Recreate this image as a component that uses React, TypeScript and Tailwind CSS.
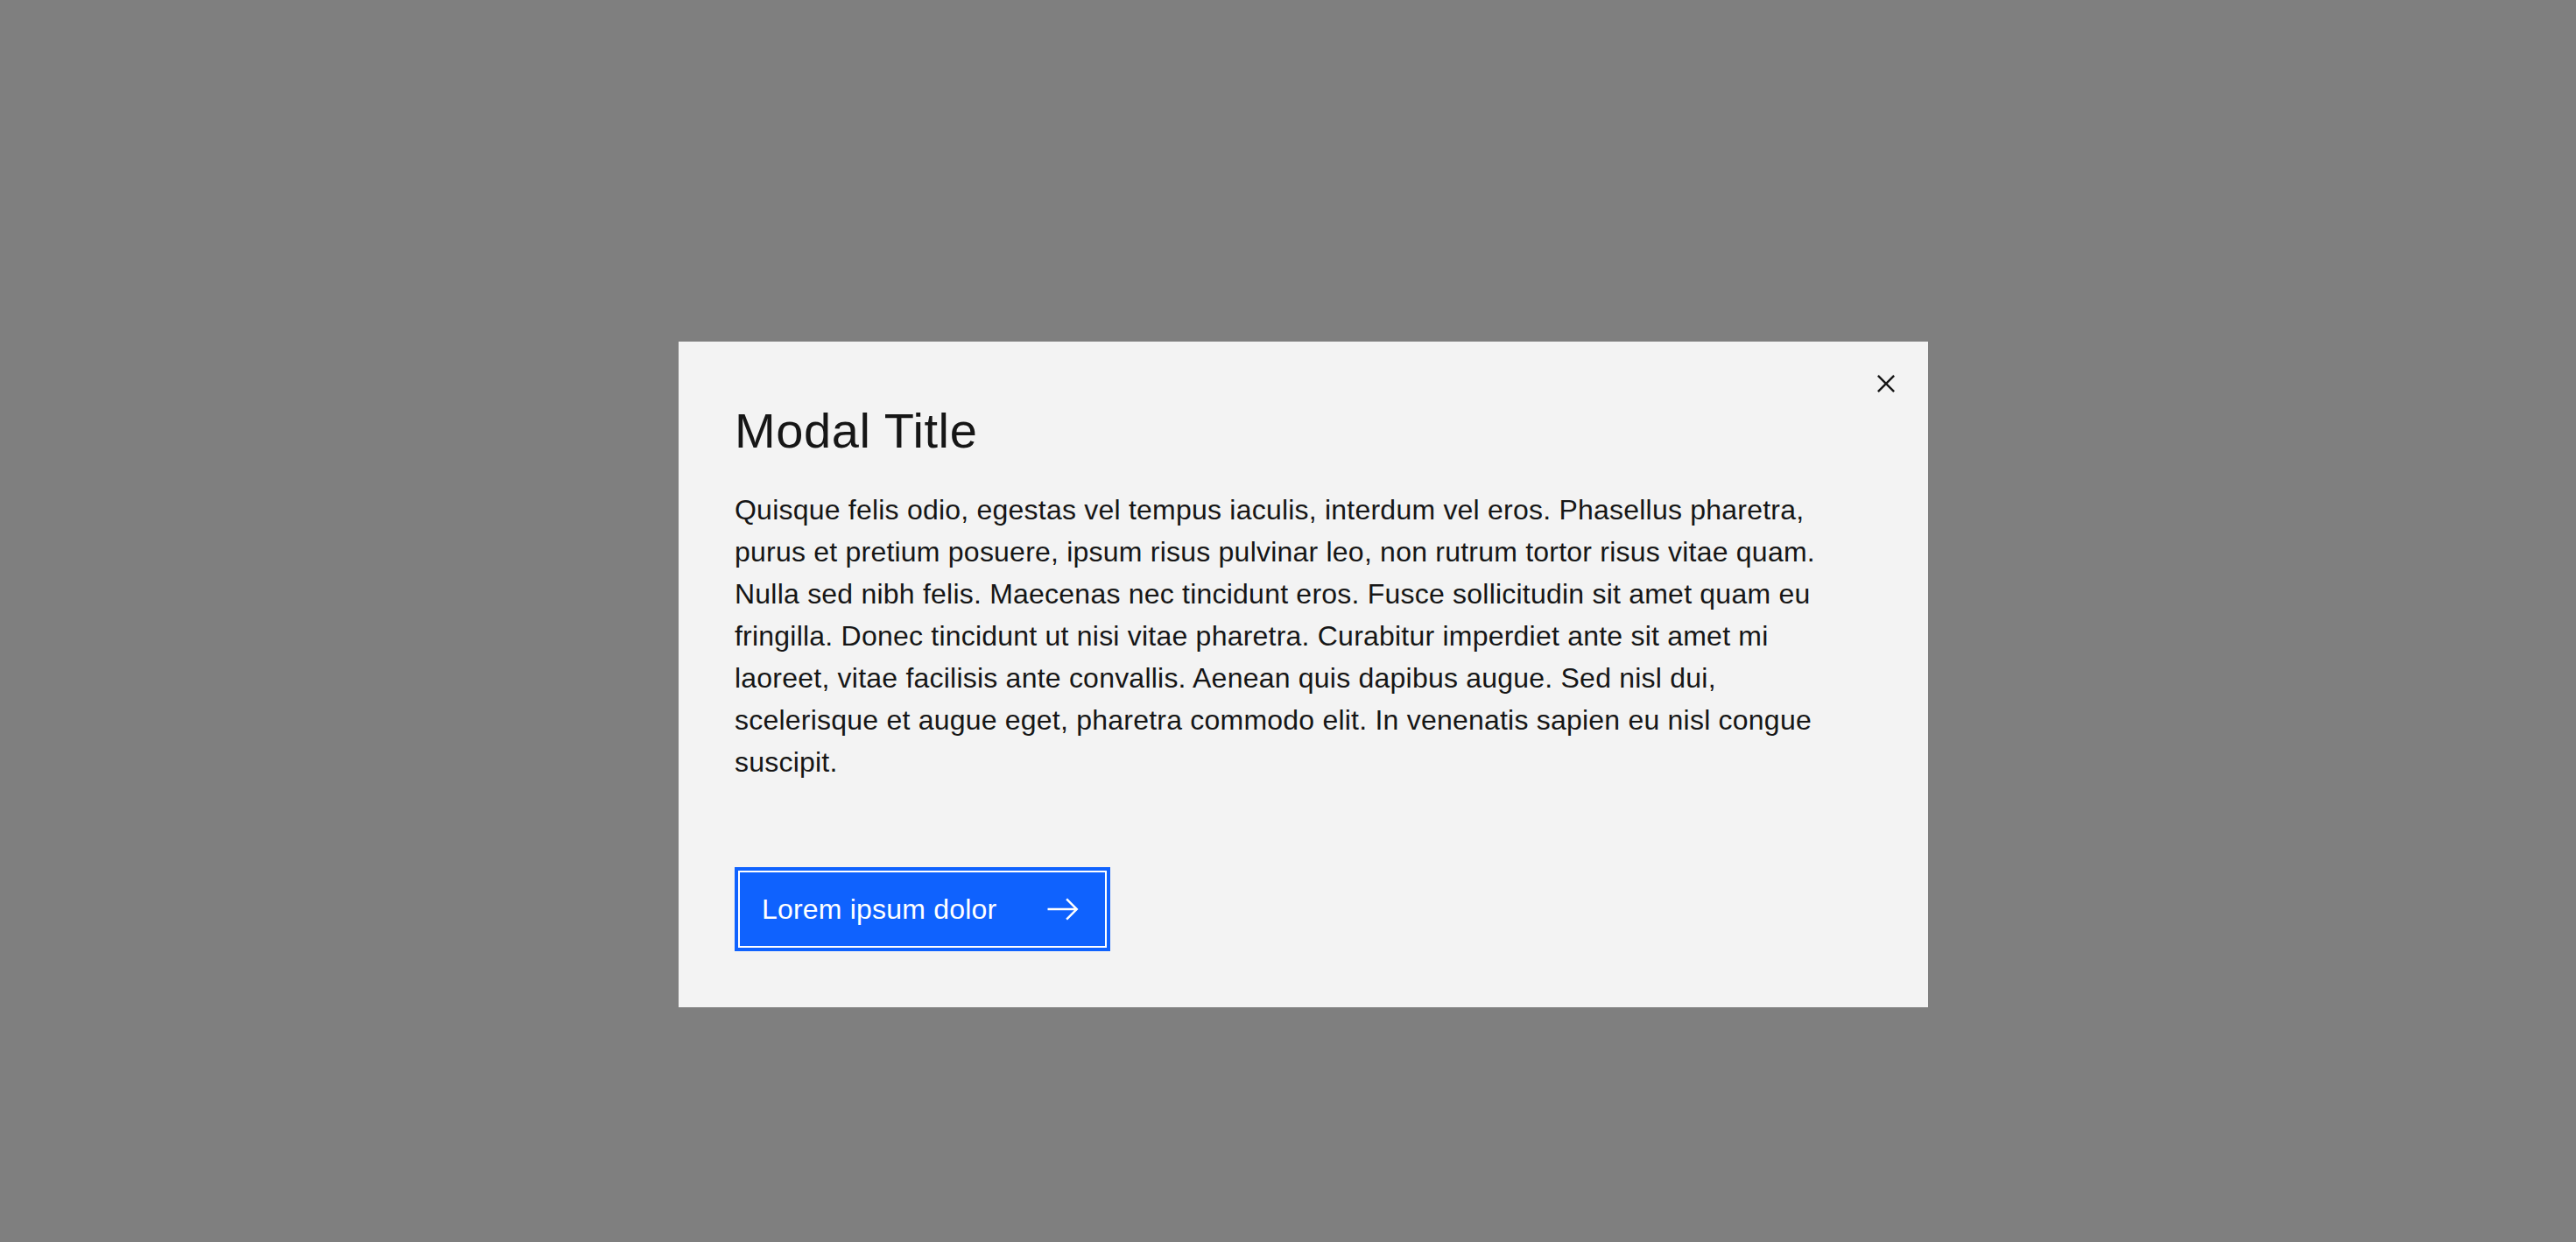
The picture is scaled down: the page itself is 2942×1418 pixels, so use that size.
const paragraphLines = [
  "Quisque felis odio, egestas vel tempus iaculis, interdum vel eros. Phasellus pharetra,",
  "purus et pretium posuere, ipsum risus pulvinar leo, non rutrum tortor risus vitae quam.",
  "Nulla sed nibh felis. Maecenas nec tincidunt eros. Fusce sollicitudin sit amet quam eu",
  "fringilla. Donec tincidunt ut nisi vitae pharetra. Curabitur imperdiet ante sit amet mi",
  "laoreet, vitae facilisis ante convallis. Aenean quis dapibus augue. Sed nisl dui,",
  "scelerisque et augue eget, pharetra commodo elit. In venenatis sapien eu nisl congue",
  "suscipit.",
];

const CloseIcon = () => (
  <svg viewBox="0 0 16 16" className="w-[40px] h-[40px]" fill="#161616">
    <path d="M12 4.7L11.3 4 8 7.3 4.7 4 4 4.7 7.3 8 4 11.3 4.7 12 8 8.7 11.3 12 12 11.3 8.7 8z" />
  </svg>
);

const ArrowIcon = () => (
  <svg viewBox="0 0 16 16" className="w-[40px] h-[40px]" fill="#ffffff">
    <path d="M9.3 3.7L13.1 7.5H1v1h12.1l-3.8 3.8L10 13l5-5-5-5z" />
  </svg>
);

const App = () => {
  return (
    <div
      className="min-h-screen w-full bg-[#7f7f7f] pt-[390px] pl-[775px]"
      style={{ fontFamily: '"Liberation Sans", Arial, sans-serif' }}
    >
      {/* Modal */}
      <div className="relative w-[1427px] bg-[#f3f3f3] pt-[66px] pb-[64px] pl-[64px] text-[#161616]">
        <button className="absolute top-0 right-0 w-[96px] h-[96px] flex items-center justify-center">
          <CloseIcon />
        </button>

        <h2 className="text-[56px] leading-[72px] font-normal tracking-[0.6px]">Modal Title</h2>

        <p className="mt-[30px] text-[32px] leading-[48px] tracking-[0.22px] whitespace-nowrap">
          {paragraphLines.map((line, index) => (
            <span key={index} className="block">
              {line}
            </span>
          ))}
        </p>

        <button className="relative mt-[96px] flex items-center h-[96px] w-[429px] bg-[#0f62fe] border-4 border-[#0f62fe] shadow-[inset_0_0_0_2px_#ffffff] pl-[27px] text-white text-[32px] leading-[48px] tracking-[0.2px] text-left">
          Lorem ipsum dolor
          <span className="absolute right-[30px] top-1/2 -translate-y-1/2 flex">
            <ArrowIcon />
          </span>
        </button>
      </div>
    </div>
  );
};

export default App;
